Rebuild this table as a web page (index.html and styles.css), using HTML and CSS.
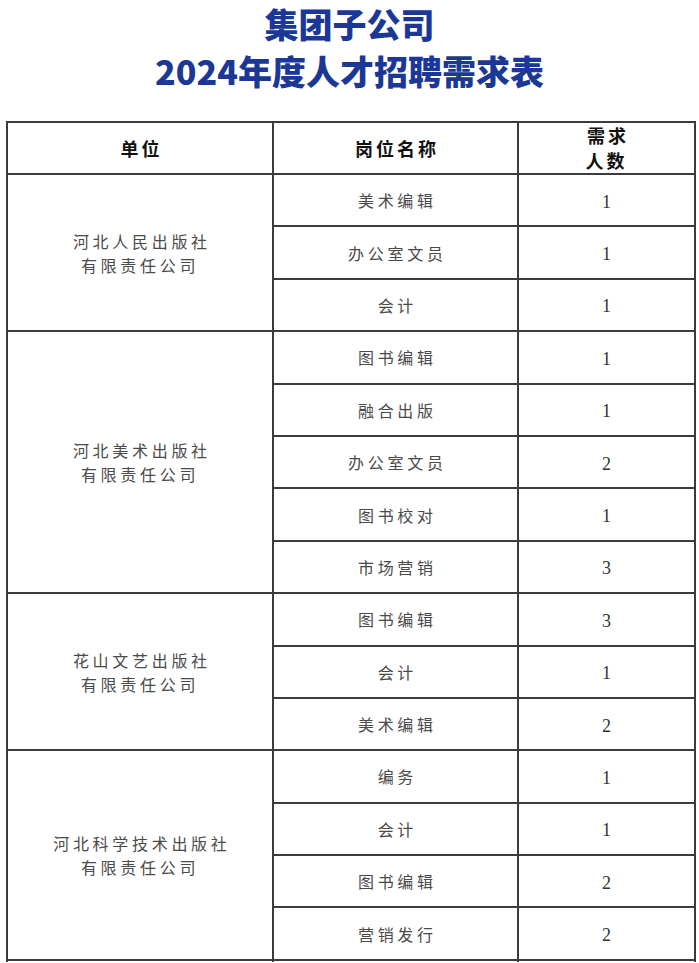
FILE: index.html
```html
<!DOCTYPE html>
<html lang="zh-CN">
<head>
<meta charset="utf-8">
<title>集团子公司2024年度人才招聘需求表</title>
<link rel="stylesheet" href="styles.css">
</head>
<body>
<div class="page">
  <h1 class="title">
    <span class="title-line">集团子公司</span>
    <span class="title-line">2024年度人才招聘需求表</span>
  </h1>
  <table class="demand">
    <colgroup>
      <col class="c-unit">
      <col class="c-post">
      <col class="c-num">
    </colgroup>
    <thead>
      <tr>
        <th>单位</th>
        <th>岗位名称</th>
        <th>需求<br>人数</th>
      </tr>
    </thead>
    <tbody>
      <tr><td class="unit" rowspan="3">河北人民出版社<br>有限责任公司</td><td class="post">美术编辑</td><td class="num">1</td></tr>
      <tr><td class="post">办公室文员</td><td class="num">1</td></tr>
      <tr><td class="post">会计</td><td class="num">1</td></tr>

      <tr><td class="unit" rowspan="5">河北美术出版社<br>有限责任公司</td><td class="post">图书编辑</td><td class="num">1</td></tr>
      <tr><td class="post">融合出版</td><td class="num">1</td></tr>
      <tr><td class="post">办公室文员</td><td class="num">2</td></tr>
      <tr><td class="post">图书校对</td><td class="num">1</td></tr>
      <tr><td class="post">市场营销</td><td class="num">3</td></tr>

      <tr><td class="unit" rowspan="3">花山文艺出版社<br>有限责任公司</td><td class="post">图书编辑</td><td class="num">3</td></tr>
      <tr><td class="post">会计</td><td class="num">1</td></tr>
      <tr><td class="post">美术编辑</td><td class="num">2</td></tr>

      <tr><td class="unit" rowspan="4">河北科学技术出版社<br>有限责任公司</td><td class="post">编务</td><td class="num">1</td></tr>
      <tr><td class="post">会计</td><td class="num">1</td></tr>
      <tr><td class="post">图书编辑</td><td class="num">2</td></tr>
      <tr><td class="post">营销发行</td><td class="num">2</td></tr>

      <tr class="stub"><td></td><td></td><td></td></tr>
    </tbody>
  </table>
</div>
</body>
</html>
```

FILE: styles.css
```css
html, body {
  margin: 0;
  padding: 0;
  background: #ffffff;
  overflow: hidden;
}

.page {
  width: 699px;
  padding: 0 0 0 6px;
  box-sizing: border-box;
}

.title {
  margin: 0 0 27px -6px;
  padding: 0;
  display: flex;
  flex-direction: column;
  align-items: center;
  font-family: "Noto Sans CJK SC", "Liberation Sans", sans-serif;
  font-weight: 900;
  font-size: 34px;
  line-height: 47px;
  color: #1b3896;
}

.title-line {
  display: block;
}

.demand {
  width: 688px;
  border-collapse: collapse;
  table-layout: fixed;
}

.c-unit { width: 266px; }
.c-post { width: 245px; }
.c-num { width: 177px; }

.demand th,
.demand td {
  border: 2px solid #3c3c3c;
  padding: 0;
  text-align: center;
  vertical-align: middle;
}

.demand th {
  height: 50px;
  font-family: "Noto Sans CJK SC", "Liberation Sans", sans-serif;
  font-weight: 700;
  font-size: 18px;
  line-height: 25px;
  letter-spacing: 3px;
  text-indent: 3px;
  color: #111111;
}

.demand td {
  height: 50.4px;
}

.demand .stub td {
  height: 1px;
  border-bottom: none;
}

.unit,
.post {
  font-family: "Noto Sans CJK SC", sans-serif;
  font-weight: 400;
  font-size: 16px;
  line-height: 24px;
  letter-spacing: 3.7px;
  text-indent: 3.7px;
  color: #4a4a4a;
}

.num {
  font-family: "Liberation Serif", serif;
  font-size: 18px;
  line-height: 24px;
  color: #333333;
}

.demand td.num {
  height: 47.4px;
  padding-top: 3px;
}
```
